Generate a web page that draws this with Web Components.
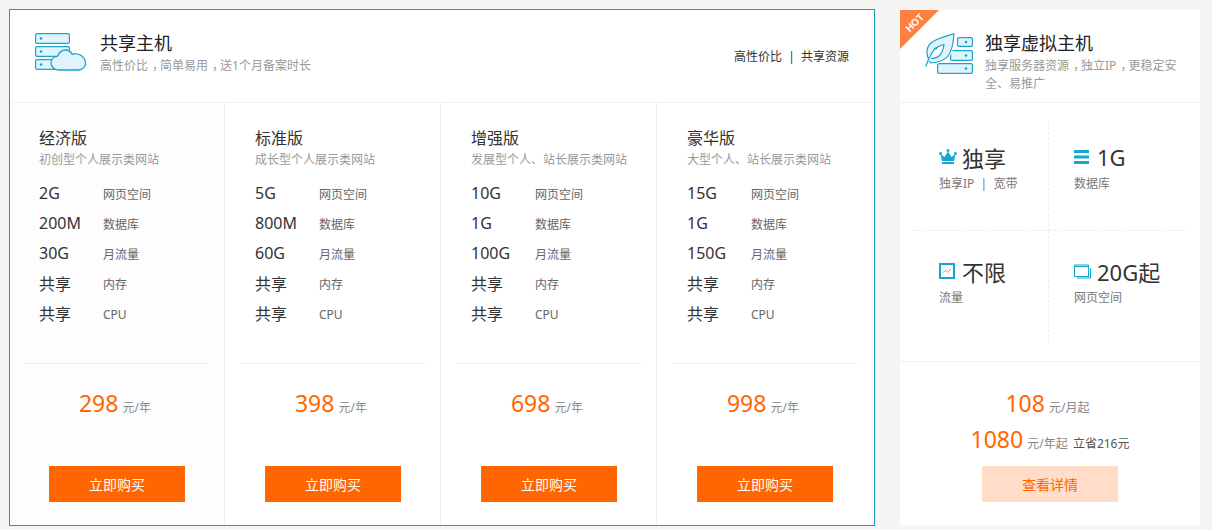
<!DOCTYPE html>
<html lang="zh"><head><meta charset="utf-8"><title>主机</title>
<style>
html,body{margin:0;padding:0;background:#f5f5f3;height:530px;overflow:hidden}
body{font-family:"Noto Sans","Noto Sans CJK SC",sans-serif;color:#333}
</style></head><body>
<price-page>
  <shared-card>
    <plan-col first name="经济版" desc="初创型个人展示类网站" price="298" data-s="2G,200M,30G,共享,共享"></plan-col>
    <plan-col name="标准版" desc="成长型个人展示类网站" price="398" data-s="5G,800M,60G,共享,共享"></plan-col>
    <plan-col name="增强版" desc="发展型个人、站长展示类网站" price="698" data-s="10G,1G,100G,共享,共享"></plan-col>
    <plan-col last name="豪华版" desc="大型个人、站长展示类网站" price="998" data-s="15G,1G,150G,共享,共享"></plan-col>
  </shared-card>
  <vhost-card></vhost-card>
</price-page>
<script>
const def=(n,css,html,init)=>customElements.define(n,class extends HTMLElement{
  constructor(){super();this.attachShadow({mode:'open'})}
  connectedCallback(){this.shadowRoot.innerHTML=`<style>${css}</style>`+(typeof html==='function'?html(this):html);init&&init(this)}
});
const cm=`<span style="font-feature-settings:'halt';margin:0 2px 0 4px">，</span>`;
def('price-page',`:host{display:flex;gap:25px;align-items:flex-start;padding:9px 0 0 9px;width:1203px;box-sizing:border-box}`,`<slot></slot>`);
const ic1=`<svg width="52" height="38" viewBox="0 0 52 38" fill="none" stroke="#1ba3c9" stroke-width="1.2">
<rect x=".6" y=".6" width="33.8" height="9.8" rx="1.5" fill="#dff4fc"/><rect x=".6" y="13.6" width="33.8" height="9.8" rx="1.5" fill="#dff4fc"/><rect x=".6" y="26.6" width="33.8" height="9.8" rx="1.5" fill="#dff4fc"/>
<circle cx="6" cy="5.5" r="1.3" fill="#1ba3c9" stroke="none"/><circle cx="6" cy="18.5" r="1.3" fill="#1ba3c9" stroke="none"/><circle cx="6" cy="31.5" r="1.3" fill="#1ba3c9" stroke="none"/>
<path d="M24 37c-4.500 0-8-3-8-7 0-3.600 2.700-6.300 6.500-6.700C24 19.500 27 17 30.500 17c3.200 0 5.300 1.500 6.700 4.300 1-.5 2-.7 3-.7 5 0 9.300 3.800 10.300 8 .8 4.200-2.500 8.400-7 8.400z" fill="#dff4fc" stroke-width="1.3" stroke="#1ba3c9"/></svg>`;
def('shared-card',`:host{display:block;width:866px;height:517px;box-sizing:border-box;border:1px solid #189cbe;background:#fff}
header{box-sizing:border-box;border-bottom:1px solid #f0f0f0;display:flex;height:93px;padding:23px 25px 0 25px}
.ic{width:52px;height:38px;flex:none;margin-right:13px}
.t{font-size:18px;line-height:22px;color:#222;margin-top:-1px}
.s{font-size:12px;line-height:18px;color:#999;margin-top:3px}
.r{margin-left:auto;font-size:12px;color:#333;line-height:18px;margin-top:15px;white-space:pre}
.g{display:grid;grid-template-columns:215px repeat(3,216px);height:422px}`,
`<header><div class="ic">${ic1}</div><div><div class="t">共享主机</div><div class="s">高性价比${cm}简单易用${cm}送1个月备案时长</div></div><div class="r">高性价比  |  共享资源</div></header><div class="g"><slot></slot></div>`);
def('plan-col',`:host{display:flex;flex-direction:column;box-sizing:border-box;border-right:1px solid #f0f0f0;padding:25px 0 0 var(--i,15px);min-width:0}
:host([first]){--i:14px;background:#fdfdfd}:host([last]){border-right:0}
.in{padding-left:15px}
h3{margin:0;font-weight:400;font-size:16px;line-height:20px;color:#333}
.d{font-size:12px;line-height:18px;color:#999;margin:3px 0 10px;white-space:nowrap}
.row{display:flex;height:30px;align-items:center}
.v{width:64px;font-size:16px;color:#333;padding-bottom:2px}.l{font-size:12px;color:#666}
hr{border:0;border-top:1px solid #f0f0f0;margin:34px 0 0;width:186px}
.p{width:182px;padding-right:4px;text-align:center;margin-top:24px;height:30px;line-height:30px;font-size:12px;color:#888}
.p b{font-weight:400;font-size:23px;color:#ff6600;margin-right:1px}
a{display:block;width:136px;height:36px;line-height:37px;margin:48px 0 0 25px;background:#ff6600;color:#fff;text-align:center;font-size:14px}`,
h=>`<div class="in"><h3>${h.getAttribute('name')}</h3><div class="d">${h.getAttribute('desc')}</div>${h.dataset.s.split(',').map((v,i)=>`<div class="row"><span class="v">${v}</span><span class="l">${['网页空间','数据库','月流量','内存','CPU'][i]}</span></div>`).join('')}</div><hr><div class="p"><b>${h.getAttribute('price')}</b> 元/年</div><a>立即购买</a>`);
const ic2=`<svg width="48" height="42" viewBox="0 0 48 42" fill="none" stroke="#1ba3c9" stroke-width="1.2">
<rect x="32.600" y="4.600" width="14.800" height="8.800" rx="1.2" fill="#dff4fc"/><rect x="25.600" y="17.600" width="21.800" height="9.800" rx="1.2" fill="#dff4fc"/><rect x="12.600" y="30.600" width="34.800" height="9.800" rx="1.2" fill="#dff4fc"/>
<circle cx="41" cy="9" r="1.300" fill="#1ba3c9" stroke="none"/><circle cx="41" cy="22.500" r="1.300" fill="#1ba3c9" stroke="none"/><circle cx="41" cy="35.500" r="1.300" fill="#1ba3c9" stroke="none"/>
<path d="M29 .8C22 3 12 5 6 10 1.500 14 .8 20 4 27.500 4.500 29 5 29.500 6 30c6-.5 13-2 17-7 4-5 5.500-14 6-22.200z" fill="#dff4fc" stroke="#fff" stroke-width="3"/>
<path d="M29 .8C22 3 12 5 6 10 1.500 14 .8 20 4 27.500 4.500 29 5 29.500 6 30c6-.5 13-2 17-7 4-5 5.500-14 6-22.200z" fill="#dff4fc"/>
<path d="M.8 33.500C3 27 6 19 11 15c2-1.500 5-3 8-3.500-.5 4-1.500 8-4.500 11-2.500 2.500-5.500 3-8.500 3M12 16c-1-1-2-1-3-.5" stroke-width="1.200" fill="#fff"/></svg>`;
def('vhost-card',`:host{display:block;width:300px;height:515px;margin-top:1px;background:#fff;position:relative;overflow:hidden}
.rb{position:absolute;left:0;top:0;width:39px;height:39px;background:#ff7f3f;clip-path:polygon(0 0,100% 0,0 100%)}
.hot{position:absolute;left:-1px;top:7px;width:32px;text-align:center;transform:rotate(-45deg);font:700 10px/12px "Liberation Sans",sans-serif;color:#fff}
header{height:93px;box-sizing:border-box;border-bottom:1px solid #f0f0f0;display:flex;padding:23px 20px 0 25px}
.ic{width:48px;height:42px;flex:none;margin-right:12px}
.t{font-size:18px;line-height:22px;color:#222;white-space:nowrap;margin-top:-1px}
.s{font-size:12px;line-height:18px;color:#999;margin-top:3px;white-space:nowrap}
.g{display:grid;grid-template-columns:136px 136px;grid-template-rows:109px 111px;margin:19px 0 19px 13px;width:272px;height:220px}
.f{border-top:1px solid #f0f0f0;text-align:center;height:163px;padding-top:26px;box-sizing:border-box;font-size:12px;color:#888}
.pl{line-height:30px;height:30px;margin-bottom:6px}
.pl b{font-weight:400;font-size:23px;color:#ff6600;margin-right:1px}
.pl i{font-style:normal;color:#555;margin-left:2px}
.one{padding-right:5px}
a{display:block;width:136px;height:36px;line-height:37px;margin:12px auto 0;background:#ffddc8;color:#ff6600;text-align:center;font-size:14px}`,
`<div class="rb"></div><div class="hot">HOT</div>
<header><div class="ic">${ic2}</div><div><div class="t">独享虚拟主机</div><div class="s">独享服务器资源${cm}独立IP${cm}更稳定安<br>全、易推广</div></div></header>
<div class="g">
<stat-cell style="--pt:20px;border-right:1px dashed #ececec;border-bottom:1px dashed #ececec" v="独享" l="独享IP  |  宽带" ic="crown"></stat-cell>
<stat-cell style="--pt:20px;--pl:25px;border-bottom:1px dashed #ececec" v="1G" l="数据库" ic="list"></stat-cell>
<stat-cell style="--pt:25px;border-right:1px dashed #ececec" v="不限" l="流量" ic="check"></stat-cell>
<stat-cell style="--pt:25px;--pl:25px" v="20G起" l="网页空间" ic="win"></stat-cell>
</div>
<div class="f"><div class="pl one"><b>108</b> 元/月起</div><div class="pl"><b>1080</b> 元/年起 <i>立省216元</i></div><a>查看详情</a></div>`);
const icons={
crown:`<svg width="18" height="16" viewBox="0 0 18 16" fill="#16a6cf"><circle cx="1.500" cy="4.500" r="1.500"/><circle cx="9" cy="1.500" r="1.500"/><circle cx="16.500" cy="4.500" r="1.500"/><path d="M1.500 5l4 3L9 2.500 12.500 8l4-3-1.500 7H3z"/><rect x="3" y="13" width="12" height="2"/></svg>`,
list:`<svg width="15" height="14" viewBox="0 0 15 14" fill="#16a6cf"><rect width="15" height="3"/><rect y="5.500" width="15" height="3"/><rect y="11" width="15" height="3"/></svg>`,
check:`<svg width="16" height="16" viewBox="0 0 16 16" fill="none"><rect x="1" y="1" width="14" height="14" stroke="#16a6cf" stroke-width="2"/><path d="M4 9.500l2.500-2 2 2L12 6" stroke="#4fbbd9"/></svg>`,
win:`<svg width="17" height="15" viewBox="0 0 17 15" fill="none" stroke="#16a6cf"><path d="M.5 2.500V1h14v2" stroke-width="1"/><rect x=".5" y="2.500" width="14" height="10"/><path d="M16.500 4v10H3"/></svg>`};
def('stat-cell',`:host{display:block;box-sizing:border-box;padding:var(--pt) 0 0 var(--pl,26px)}
.a{display:flex;align-items:center;height:30px;font-size:22px;color:#333;white-space:nowrap}
.ic{width:23px;flex:none;display:flex;align-items:center}.ic svg{display:block}
.l{font-size:12px;line-height:18px;color:#777;white-space:pre;margin-top:3px}`,
h=>`<div class="a"><span class="ic">${icons[h.getAttribute('ic')]}</span>${h.getAttribute('v')}</div><div class="l">${h.getAttribute('l')}</div>`);
</script>
</body></html>
